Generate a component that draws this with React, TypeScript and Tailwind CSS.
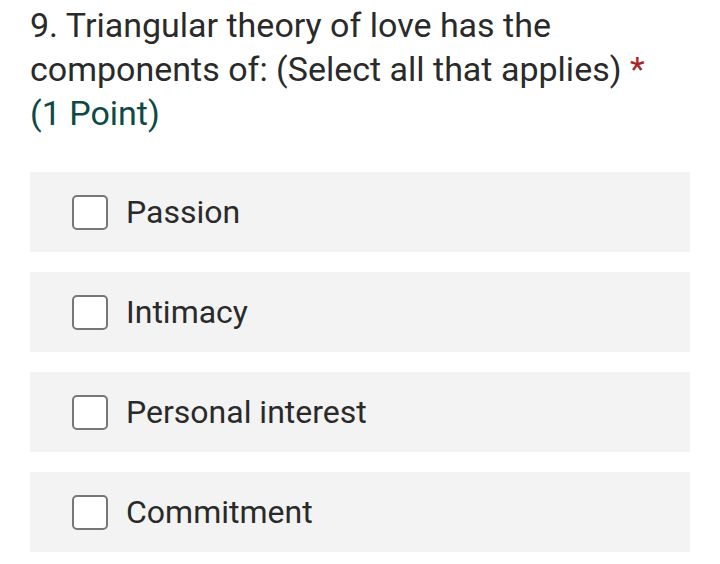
import React from "react";

const options = ["Passion", "Intimacy", "Personal interest", "Commitment"];

export default function App() {
  return (
    <div className="w-[720px] h-[564px] bg-white overflow-hidden" style={{ fontFamily: "Roboto, 'Noto Sans', sans-serif" }}>
      <div className="pl-[30px] pr-[20px] pt-[3px]">
        <div className="text-[34px] leading-[44px] text-[#2a2a2a]">
          9. Triangular theory of love has the components of: (Select all that applies) <span className="text-[#a8262a]">*</span>
        </div>
        <div className="text-[34px] leading-[44px] text-[#0d4a45]">(1 Point)</div>
      </div>
      <div className="mt-[37px] flex flex-col gap-[20px] pl-[30px] pr-[30px]">
        {options.map((o) => (
          <div key={o} className="h-[80px] bg-[#f3f3f3] flex items-center pl-[42px]">
            <div className="w-[36px] h-[35px] border-2 border-[#777777] rounded-[5px] bg-white shrink-0" />
            <div className="ml-[18px] text-[32px] text-[#2a2a2a]">{o}</div>
          </div>
        ))}
      </div>
    </div>
  );
}
